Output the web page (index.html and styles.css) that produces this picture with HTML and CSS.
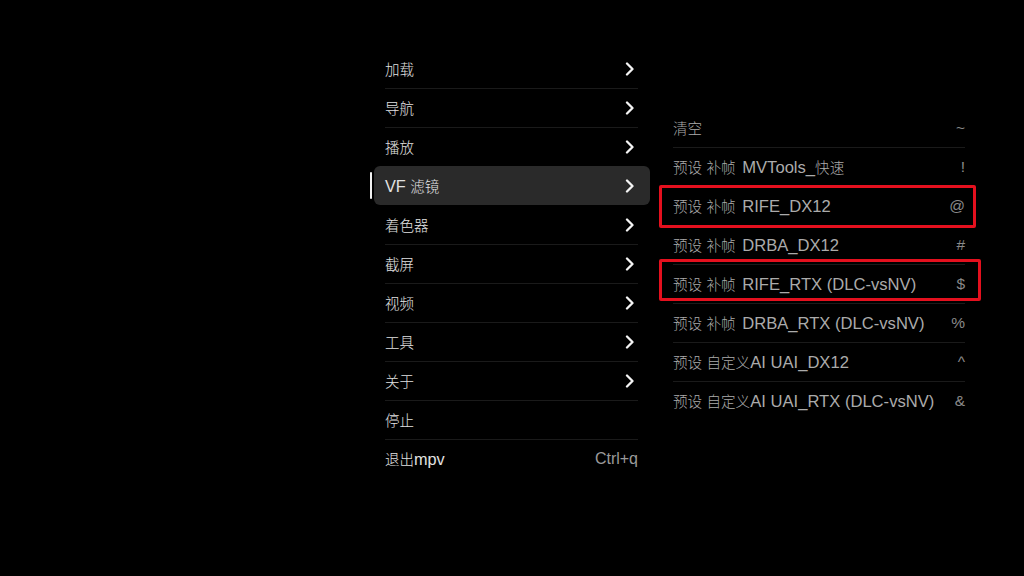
FILE: index.html
```html
<!DOCTYPE html>
<html>
<head>
<meta charset="utf-8">
<link rel="stylesheet" href="styles.css">
</head>
<body>
<div class="stage">
  <div class="menu main">
    <div class="row"><span class="label"><span class="cj">加载</span></span><svg class="chev" viewBox="0 0 10 14"><path d="M2 1.5 L7.5 7 L2 12.5"/></svg></div>
    <div class="row"><span class="label"><span class="cj">导航</span></span><svg class="chev" viewBox="0 0 10 14"><path d="M2 1.5 L7.5 7 L2 12.5"/></svg></div>
    <div class="row"><span class="label"><span class="cj">播放</span></span><svg class="chev" viewBox="0 0 10 14"><path d="M2 1.5 L7.5 7 L2 12.5"/></svg></div>
    <div class="row active"><span class="label">VF <span class="cj">滤镜</span></span><svg class="chev" viewBox="0 0 10 14"><path d="M2 1.5 L7.5 7 L2 12.5"/></svg></div>
    <div class="row"><span class="label"><span class="cj">着色器</span></span><svg class="chev" viewBox="0 0 10 14"><path d="M2 1.5 L7.5 7 L2 12.5"/></svg></div>
    <div class="row"><span class="label"><span class="cj">截屏</span></span><svg class="chev" viewBox="0 0 10 14"><path d="M2 1.5 L7.5 7 L2 12.5"/></svg></div>
    <div class="row"><span class="label"><span class="cj">视频</span></span><svg class="chev" viewBox="0 0 10 14"><path d="M2 1.5 L7.5 7 L2 12.5"/></svg></div>
    <div class="row"><span class="label"><span class="cj">工具</span></span><svg class="chev" viewBox="0 0 10 14"><path d="M2 1.5 L7.5 7 L2 12.5"/></svg></div>
    <div class="row"><span class="label"><span class="cj">关于</span></span><svg class="chev" viewBox="0 0 10 14"><path d="M2 1.5 L7.5 7 L2 12.5"/></svg></div>
    <div class="row"><span class="label"><span class="cj">停止</span></span></div>
    <div class="row last"><span class="label"><span class="cj">退出</span>mpv</span><span class="hint">Ctrl+q</span></div>
  </div>
  <div class="menu sub">
    <div class="row"><span class="label"><span class="cj">清空</span></span><span class="hint">~</span></div>
    <div class="row"><span class="label"><span class="cj sp">预设 补帧</span> MVTools_<span class="cj">快速</span></span><span class="hint">!</span></div>
    <div class="row"><span class="label"><span class="cj sp">预设 补帧</span> RIFE_DX12</span><span class="hint">@</span></div>
    <div class="row"><span class="label"><span class="cj sp">预设 补帧</span> DRBA_DX12</span><span class="hint">#</span></div>
    <div class="row"><span class="label"><span class="cj sp">预设 补帧</span> RIFE_RTX (DLC-vsNV)</span><span class="hint">$</span></div>
    <div class="row"><span class="label"><span class="cj sp">预设 补帧</span> DRBA_RTX (DLC-vsNV)</span><span class="hint">%</span></div>
    <div class="row"><span class="label"><span class="cj">预设 自定义</span>AI UAI_DX12</span><span class="hint">^</span></div>
    <div class="row last"><span class="label"><span class="cj">预设 自定义</span>AI UAI_RTX (DLC-vsNV)</span><span class="hint">&amp;</span></div>
    <div class="mark mark1"></div>
    <div class="mark mark2"></div>
  </div>
</div>
</body>
</html>
```
FILE: styles.css
```css
html, body {
  margin: 0;
  padding: 0;
  background: #000;
  width: 1024px;
  height: 576px;
  overflow: hidden;
}
body {
  font-family: "Liberation Sans", "Noto Sans CJK SC", sans-serif;
}
.stage {
  display: flex;
  align-items: flex-start;
  padding: 49px 0 0 374px;
  gap: 12px;
}
.menu {
  display: flex;
  flex-direction: column;
  position: relative;
}
.main {
  width: 276px;
  color: #e2e2e2;
  font-size: 16.3px;
}
.main .cj {
  font-size: 14.5px;
}
.sub {
  width: 315px;
  margin-top: 59px;
  color: #ababab;
  font-size: 16.6px;
}
.sub .cj {
  font-size: 14.6px;
  word-spacing: 1px;
}
.cj {
  font-family: "Noto Sans CJK SC", sans-serif;
  font-weight: 300;
}
.cj.sp {
  margin-right: 2px;
}
.label {
  white-space: pre;
}
.row {
  position: relative;
  display: flex;
  align-items: center;
  justify-content: space-between;
  height: 39px;
  padding: 0 12px 0 11px;
}
.main .row {
  padding: 0 15px 0 11px;
}
.row::after {
  content: "";
  position: absolute;
  left: 11px;
  right: 12px;
  bottom: -0.5px;
  height: 1px;
  background: #1a1a1a;
}
.row.last::after,
.row.active::after {
  display: none;
}
.main .row.last {
  padding-right: 12px;
}
.main .row.active {
  background: #2a2a2a;
  border-radius: 6px;
}
.main .row.active::before {
  content: "";
  position: absolute;
  left: -4px;
  top: 6px;
  bottom: 6px;
  width: 2px;
  background: #f0f0f0;
  border-radius: 1px;
}
.chev {
  width: 10px;
  height: 14px;
  fill: none;
  stroke: #f4f4f4;
  stroke-width: 2.3;
  stroke-linecap: round;
  stroke-linejoin: round;
}
.hint {
  color: #8a8a8a;
  font-size: 15.5px;
}
.main .hint {
  color: #9a9a9a;
  font-size: 16px;
}
.mark {
  position: absolute;
  border: 3px solid #e4101e;
  border-radius: 2px;
  box-sizing: border-box;
}
.mark1 {
  left: -3px;
  top: 77px;
  width: 317px;
  height: 43px;
}
.mark2 {
  left: -3px;
  top: 151px;
  width: 322px;
  height: 42px;
}
```
